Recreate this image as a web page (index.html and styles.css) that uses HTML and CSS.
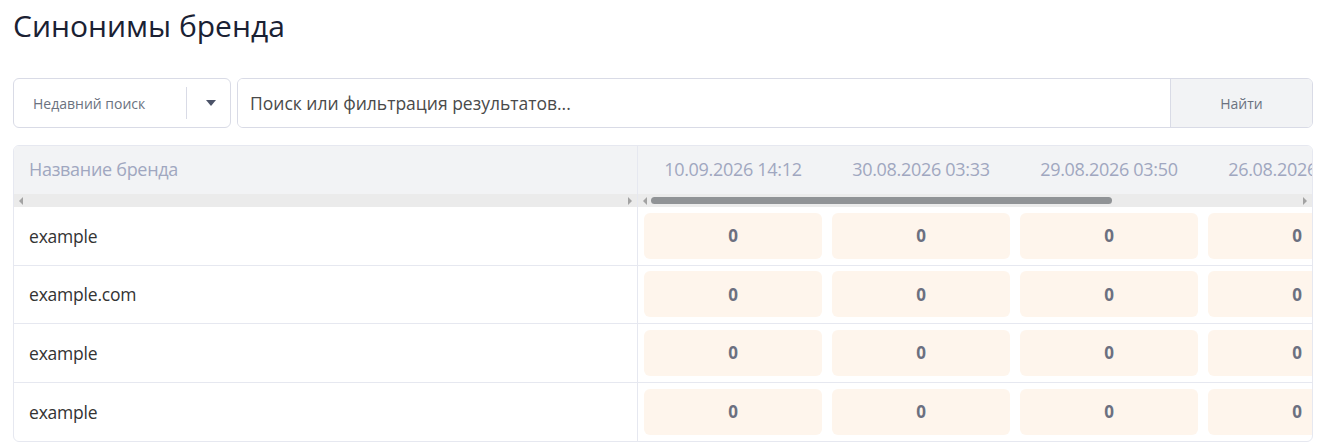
FILE: index.html
```html
<!DOCTYPE html>
<html>
<head>
  <link rel="stylesheet" href="styles.css">
</head>
<body>
  <div class="page">
    <h1 class="page-title">Синонимы бренда</h1>

    <div class="search-bar">
      <div class="recent">
        <span class="recent-label">Недавний поиск</span>
        <span class="recent-divider"></span>
        <span class="recent-caret"></span>
      </div>
      <div class="search-field">
        <input class="search-input" type="text" placeholder="Поиск или фильтрация результатов...">
        <button class="search-btn">Найти</button>
      </div>
    </div>

    <div class="grid">
      <!-- Fixed brand column -->
      <div class="fixed-pane">
        <div class="head-cell">Название бренда</div>
        <div class="track">
          <span class="arrow arrow-left"></span>
          <span class="arrow arrow-right"></span>
        </div>
        <div class="row"><span class="brand">example</span></div>
        <div class="row"><span class="brand">example.com</span></div>
        <div class="row"><span class="brand">example</span></div>
        <div class="row"><span class="brand">example</span></div>
      </div>

      <!-- Scrollable date columns -->
      <div class="scroll-pane">
        <div class="date-head">
          <div class="date">10.09.2026 14:12</div>
          <div class="date">30.08.2026 03:33</div>
          <div class="date">29.08.2026 03:50</div>
          <div class="date">26.08.2026 03:41</div>
        </div>
        <div class="track">
          <span class="arrow arrow-left"></span>
          <span class="thumb"></span>
          <span class="arrow arrow-right"></span>
        </div>
        <div class="row cells">
          <div class="pill">0</div><div class="pill">0</div><div class="pill">0</div><div class="pill">0</div>
        </div>
        <div class="row cells">
          <div class="pill">0</div><div class="pill">0</div><div class="pill">0</div><div class="pill">0</div>
        </div>
        <div class="row cells">
          <div class="pill">0</div><div class="pill">0</div><div class="pill">0</div><div class="pill">0</div>
        </div>
        <div class="row cells">
          <div class="pill">0</div><div class="pill">0</div><div class="pill">0</div><div class="pill">0</div>
        </div>
      </div>
    </div>
  </div>
</body>
</html>
```

FILE: styles.css
```css
/* Base */
body {
  margin: 0;
  background: #fff;
  font-family: "Open Sans", "Noto Sans", sans-serif;
  color: #1f2937;
}

.page {
  padding: 4px 20px 0 13px;
}

.page-title {
  margin: 0 0 30px;
  font-size: 30px;
  font-weight: 400;
  line-height: 44px;
  color: #1a2133;
}

/* Search bar */
.search-bar {
  display: flex;
  gap: 6px;
  height: 50px;
  margin-bottom: 17px;
}

.recent {
  width: 218px;
  box-sizing: border-box;
  display: flex;
  align-items: center;
  border: 1px solid #d9dbe6;
  border-radius: 6px;
  padding-left: 19px;
}

.recent-label {
  font-size: 14px;
  color: #6b7280;
  width: 153px;
}

.recent-divider {
  width: 1px;
  height: 32px;
  background: #d9dbe6;
}

.recent-caret {
  margin-left: 19px;
  width: 0;
  height: 0;
  border-left: 5px solid transparent;
  border-right: 5px solid transparent;
  border-top: 6px solid #4b5368;
}

.search-field {
  flex: 1;
  display: flex;
  border: 1px solid #d9dbe6;
  border-radius: 6px;
  overflow: hidden;
}

.search-input {
  flex: 1;
  border: 0;
  outline: none;
  padding: 0 12px;
  font-family: inherit;
  font-size: 17.5px;
  color: #333;
}

.search-input::placeholder {
  color: #4a4a4a;
}

.search-btn {
  width: 142px;
  border: 0;
  border-left: 1px solid #d9dbe6;
  background: #f2f3f5;
  font-family: inherit;
  font-size: 14px;
  color: #6b7280;
}

/* Grid */
.grid {
  display: flex;
  border: 1px solid #e6e8f0;
  border-radius: 6px;
  overflow: hidden;
}

.fixed-pane {
  width: 624px;
  box-sizing: border-box;
  flex: none;
  border-right: 1px solid #e6e8f0;
}

.scroll-pane {
  flex: 1;
  min-width: 0;
  overflow: hidden;
}

.head-cell,
.date-head {
  height: 48px;
  box-sizing: border-box;
  padding-bottom: 3px;
  background: #f2f3f5;
  display: flex;
  align-items: center;
  font-size: 18px;
  color: #a0a7c0;
  letter-spacing: -0.3px;
}

.head-cell {
  padding-left: 15px;
}

.date-head {
  padding-left: 6px;
  gap: 10px;
}

.date {
  flex: none;
  width: 178px;
  text-align: center;
  white-space: nowrap;
}

/* Drawn scrollbar track */
.track {
  height: 13px;
  background: #ebebeb;
  display: flex;
  align-items: center;
  padding: 0 5px;
  gap: 4px;
}

.arrow {
  width: 0;
  height: 0;
  border-top: 4px solid transparent;
  border-bottom: 4px solid transparent;
}

.arrow-left {
  border-right: 4px solid #a3a3a3;
}

.arrow-right {
  border-left: 4px solid #a3a3a3;
  margin-left: auto;
}

.thumb {
  width: 461px;
  height: 7px;
  border-radius: 4px;
  background: #909396;
}

/* Rows */
.row {
  height: 58.5px;
  box-sizing: border-box;
  border-bottom: 1px solid #e6e8f0;
  display: flex;
  align-items: center;
}

.row:last-child {
  border-bottom: 0;
}

.brand {
  padding-left: 15px;
  font-size: 17.5px;
  color: #333;
  letter-spacing: -0.2px;
}

.cells {
  padding-left: 6px;
  gap: 10px;
}

.pill {
  flex: none;
  width: 178px;
  height: 46px;
  background: #fef5ec;
  border-radius: 6px;
  display: flex;
  align-items: center;
  justify-content: center;
  font-size: 17px;
  font-weight: 700;
  color: #6b7080;
}
```
